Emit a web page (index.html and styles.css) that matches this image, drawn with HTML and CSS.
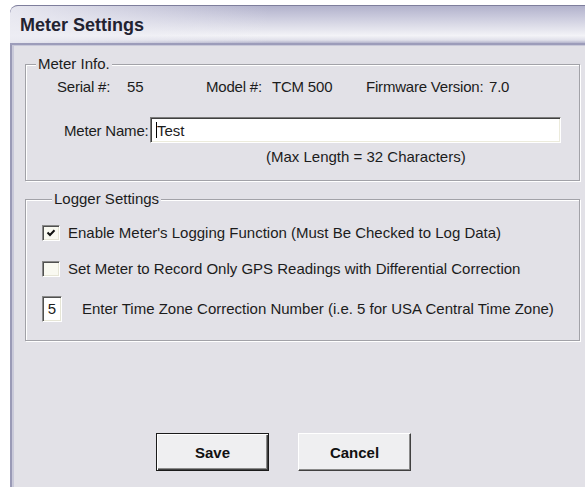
FILE: index.html
```html
<!DOCTYPE html>
<html>
<head>
<meta charset="utf-8">
<title>Meter Settings</title>
<link rel="stylesheet" href="styles.css">
</head>
<body>
<div class="window">
  <div class="titlebar"><span class="title">Meter Settings</span></div>
  <div class="client">
    <fieldset class="group info">
      <legend>Meter Info.</legend>
      <div class="info-row">
        <span>Serial #:</span><span>55</span>
        <span>Model #:</span><span>TCM 500</span>
        <span>Firmware Version:</span><span>7.0</span>
      </div>
      <div class="name-row">
        <span class="name-label">Meter Name:</span>
        <div class="textbox"><span class="caret"></span>Test</div>
      </div>
      <div class="note">(Max Length = 32 Characters)</div>
    </fieldset>

    <fieldset class="group logger">
      <legend>Logger Settings</legend>
      <div class="opt">
        <span class="check checked">
          <svg viewBox="0 0 10 10" width="10" height="10"><path d="M1.5 4.5 L4 7 L8.5 2.2" fill="none" stroke="#111" stroke-width="2"/></svg>
        </span>
        <span>Enable Meter's Logging Function (Must Be Checked to Log Data)</span>
      </div>
      <div class="opt">
        <span class="check"></span>
        <span>Set Meter to Record Only GPS Readings with Differential Correction</span>
      </div>
      <div class="opt tz">
        <span class="numbox">5</span>
        <span>Enter Time Zone Correction Number (i.e. 5 for USA Central Time Zone)</span>
      </div>
    </fieldset>

    <div class="buttons">
      <button class="btn default">Save</button>
      <button class="btn">Cancel</button>
    </div>
  </div>
</div>
</body>
</html>
```

FILE: styles.css
```css
html, body {
  margin: 0;
  padding: 0;
  background: #ffffff;
  height: 100%;
  overflow: hidden;
}

body {
  font-family: "Liberation Sans", Arial, sans-serif;
  font-size: 15px;
  color: #1c1c1c;
  white-space: nowrap;
}

/* dialog frame */
.window {
  margin: 5px 0 0 10px;
  width: 575px;
  height: 490px;
  border-left: 2px solid #9a9ab6;
  border-right: 2px solid #9a9ab6;
  border-top-left-radius: 9px;
  background: #e2e1e7;
  box-shadow: inset 2px 0 0 #c9c9d9, inset -2px 0 0 #c9c9d9;
  display: flex;
  flex-direction: column;
}

.titlebar {
  height: 37px;
  border-top: 1px solid #7e7e9c;
  border-bottom: 2px solid #9c9cba;
  border-top-left-radius: 8px;
  margin-left: -2px;
  background:
    linear-gradient(to right, rgba(236, 236, 243, 0.9) 0%, rgba(236, 236, 243, 0) 45%),
    linear-gradient(to bottom, #b2b2cc 0%, #c6c6da 25%, #e4e4ed 62%, #f3f3f7 80%, #e0e0ea 92%, #b4b4cc 100%);
  display: flex;
  align-items: center;
  padding-left: 10px;
}

.title {
  font-weight: bold;
  font-size: 18px;
  color: #222230;
  padding-top: 2px;
}

.client {
  flex: 1;
  padding: 10px 0 0 13px;
  border-top: 1px solid #c8c8d8;
}

/* etched group boxes */
.group {
  box-sizing: border-box;
  width: 555px;
  margin: 0;
  padding: 0;
  border: 1px solid #a2a2a8;
  box-shadow: 1px 1px 0 #ffffff, inset 1px 1px 0 #ffffff;
  min-inline-size: 0;
}

.group legend {
  margin-left: 10px;
  padding: 0 2px;
  line-height: 16px;
  background: #e2e1e7;
}

.info {
  padding-bottom: 14px;
}

.info-row {
  margin-top: 6px;
  display: grid;
  grid-template-columns: 70px 79px 66px 94px 123px auto;
  padding-left: 31px;
  line-height: 18px;
  letter-spacing: -0.2px;
}

.name-row {
  margin-top: 21px;
  display: flex;
  align-items: center;
  padding-left: 38px;
}

.name-label {
  width: 86px;
  letter-spacing: -0.2px;
}

.textbox {
  box-sizing: border-box;
  width: 411px;
  height: 26px;
  background: #ffffff;
  border-top: 1px solid #7c7c7c;
  border-left: 1px solid #7c7c7c;
  border-right: 1px solid #ffffff;
  border-bottom: 1px solid #ffffff;
  box-shadow: inset 1px 1px 0 #404040, inset -1px -1px 0 #ecebdc;
  display: flex;
  align-items: center;
  padding-left: 5px;
}

.caret {
  width: 1px;
  height: 16px;
  background: #000;
}

.note {
  margin-top: 5px;
  padding-left: 240px;
  line-height: 18px;
}

.logger {
  margin-top: 10px;
  padding: 0 0 18px 16px;
}

.opt {
  display: flex;
  align-items: center;
  line-height: 18px;
  margin-top: 18px;
}

.logger legend + .opt {
  margin-top: 17px;
}

.check {
  box-sizing: border-box;
  width: 18px;
  height: 16px;
  margin-right: 8px;
  background: #f9f9f1;
  border-top: 1px solid #8a8a8a;
  border-left: 1px solid #8a8a8a;
  border-right: 1px solid #ffffff;
  border-bottom: 1px solid #ffffff;
  box-shadow: inset 1px 1px 0 #505050, inset -1px -1px 0 #e6e5d6;
  display: flex;
  align-items: center;
  justify-content: center;
}

.numbox {
  box-sizing: border-box;
  width: 20px;
  height: 26px;
  margin-right: 20px;
  background: #ffffff;
  border-top: 1px solid #8a8a8a;
  border-left: 1px solid #8a8a8a;
  border-right: 1px solid #ffffff;
  border-bottom: 1px solid #ffffff;
  box-shadow: inset 1px 1px 0 #505050, inset -1px -1px 0 #e6e5d6;
  display: flex;
  align-items: center;
  justify-content: center;
}

/* command buttons */
.buttons {
  margin-top: 92px;
  padding-left: 131px;
  display: flex;
  gap: 29px;
}

.btn {
  box-sizing: border-box;
  width: 113px;
  height: 38px;
  font-family: "Liberation Sans", Arial, sans-serif;
  font-size: 15px;
  font-weight: bold;
  color: #111;
  background: #efeff1;
  border: 1px solid;
  border-color: #ffffff #404040 #404040 #ffffff;
  box-shadow: inset -1px -1px 0 #8a8a8a;
  padding: 0;
}

.btn.default {
  border: 1px solid #1a1a1a;
  box-shadow: inset 1px 1px 0 #ffffff, inset -1px -1px 0 #404040, inset -2px -2px 0 #8a8a8a;
}
```
